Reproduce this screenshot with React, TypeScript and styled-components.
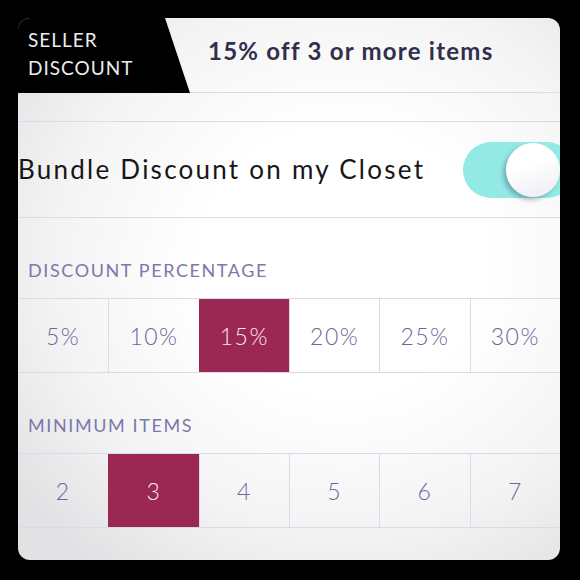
import styled, { createGlobalStyle } from "styled-components"

const GlobalStyle = createGlobalStyle`
    html, body {
        margin: 0;
        padding: 0;
        background: #000;
    }
    body {
        font-family: Lato, "Noto Sans", sans-serif;
    }
`

const Page = styled.div`
    width: 580px;
    height: 580px;
    padding: 18px;
    box-sizing: border-box;
    background: #000;
`

const Card = styled.div`
    width: 542px;
    height: 542px;
    border-radius: 12px;
    overflow: hidden;
    display: flex;
    flex-direction: column;
    background: radial-gradient(ellipse 75% 70% at 60% 45%, #ffffff 35%, #f4f4f5 70%, #e2e2e4 100%);
`

const Header = styled.div`
    display: flex;
    height: 75px;
    border-bottom: 1px solid #dcd9ee;
    box-sizing: border-box;
`

const Tab = styled.div`
    width: 172px;
    flex-shrink: 0;
    background: #000;
    clip-path: polygon(0 0, 147px 0, 100% 100%, 0 100%);
    margin-bottom: -1px;
    padding: 8px 0 0 10px;
    box-sizing: border-box;
    color: #ececec;
    font-size: 19px;
    line-height: 28px;
    font-weight: 400;
    letter-spacing: 1px;
`

const Title = styled.div`
    padding: 18px 0 0 18px;
    font-size: 24px;
    font-weight: 700;
    color: #312f4b;
    letter-spacing: 1.25px;
`

const Band = styled.div`
    height: 28px;
    border-bottom: 1px solid #dcd9ee;
`

const ToggleRow = styled.div`
    height: 96px;
    display: flex;
    align-items: center;
    justify-content: space-between;
    border-bottom: 1px solid #dcd9ee;
    box-sizing: border-box;
`

const ToggleLabel = styled.div`
    font-size: 26px;
    color: #161616;
    letter-spacing: 2.25px;
    margin-top: -1px;
`

const Track = styled.div`
    position: relative;
    width: 112px;
    height: 56px;
    border-radius: 28px;
    background: #93e9e4;
    margin-right: -15px;
    flex-shrink: 0;
`

const Knob = styled.div`
    position: absolute;
    top: 1px;
    left: 43px;
    width: 54px;
    height: 54px;
    border-radius: 50%;
    background: linear-gradient(160deg, #ffffff 40%, #ecebf1 100%);
    box-shadow: -3px 3px 4px rgba(40, 40, 80, 0.3);
`

const SectionLabel = styled.div`
    height: 80px;
    display: flex;
    align-items: flex-end;
    padding: 0 0 19px 10px;
    box-sizing: border-box;
    font-size: 18px;
    line-height: 18px;
    color: #7c78aa;
    letter-spacing: 1.6px;
`

const Segments = styled.div`
    display: grid;
    grid-template-columns: repeat(6, 1fr);
    height: 75px;
    border-top: 1px solid #dcd9ee;
    border-bottom: 1px solid #dcd9ee;
    box-sizing: border-box;
`

const Segment = styled.div<{ $active?: boolean }>`
    display: flex;
    align-items: center;
    justify-content: center;
    font-size: 23px;
    font-weight: 300;
    letter-spacing: 1.5px;
    color: ${p => p.$active ? "#f6e8ef" : "#6c689c"};
    background: ${p => p.$active ? "#9a2852" : "transparent"};
    border-left: 1px solid ${p => p.$active ? "#9a2852" : "#dcd9ee"};
    &:first-child {
        border-left: none;
    }
`

const percents = ["5%", "10%", "15%", "20%", "25%", "30%"]
const items = ["2", "3", "4", "5", "6", "7"]

const App = () => {
    return (
        <Page>
            <GlobalStyle />
            <Card>
                <Header>
                    <Tab>SELLER<br />DISCOUNT</Tab>
                    <Title>15% off 3 or more items</Title>
                </Header>
                <Band />
                <ToggleRow>
                    <ToggleLabel>Bundle Discount on my Closet</ToggleLabel>
                    <Track>
                        <Knob />
                    </Track>
                </ToggleRow>
                <SectionLabel>DISCOUNT PERCENTAGE</SectionLabel>
                <Segments>
                    {percents.map(p => (
                        <Segment key={p} $active={p === "15%"}>{p}</Segment>
                    ))}
                </Segments>
                <SectionLabel>MINIMUM ITEMS</SectionLabel>
                <Segments>
                    {items.map(i => (
                        <Segment key={i} $active={i === "3"}>{i}</Segment>
                    ))}
                </Segments>
            </Card>
        </Page>
    )
}

export default App
